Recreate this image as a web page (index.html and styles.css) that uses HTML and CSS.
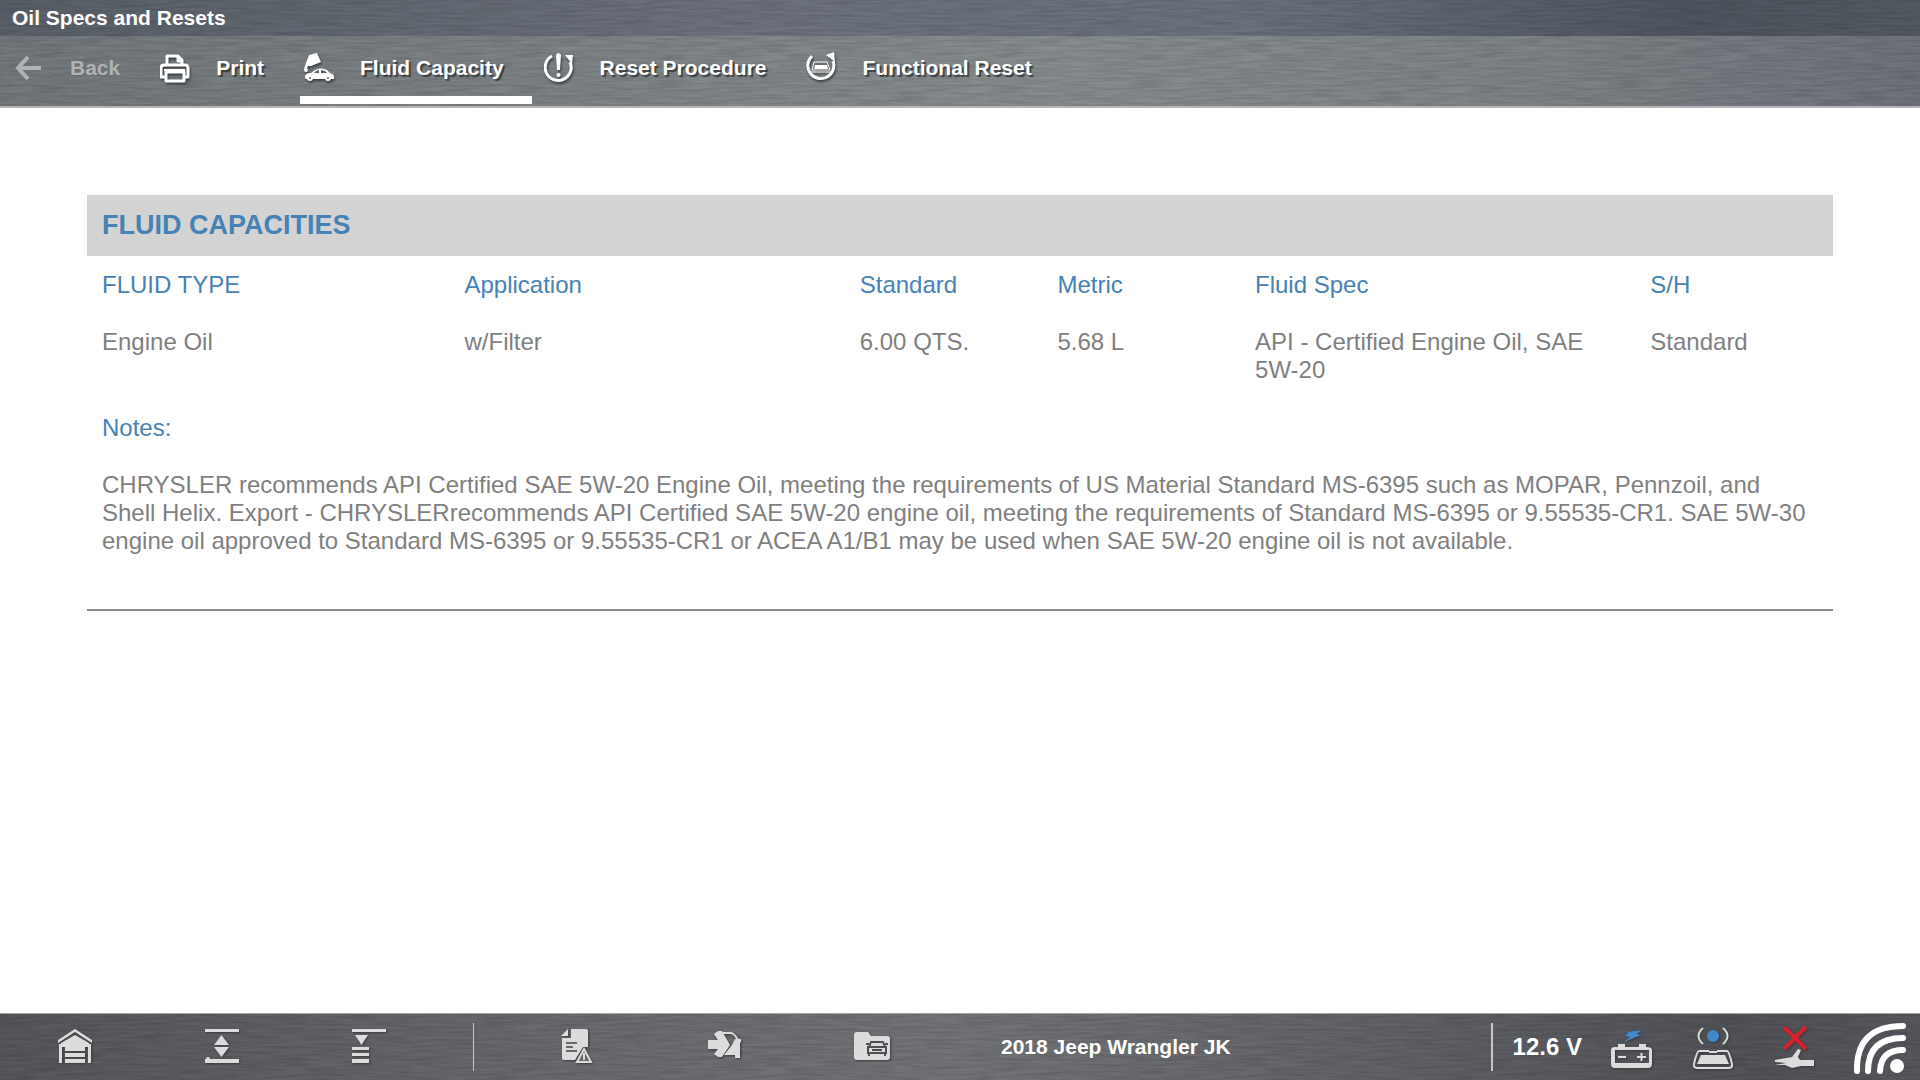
FILE: index.html
```html
<!DOCTYPE html>
<html lang="en">
<head>
<meta charset="utf-8">
<title>Oil Specs and Resets</title>
<link rel="stylesheet" href="styles.css">
</head>
<body>
<header class="top metal">
  <h1 class="title">Oil Specs and Resets</h1>
  <nav class="toolbar">
    <button class="tool" type="button" disabled>
      <svg class="tool-icon" viewBox="0 0 32 32" fill="none" stroke="currentColor" stroke-width="4"><path d="M14 5 4 16l10 11M4 16h23"/></svg>
      <span>Back</span>
    </button>
    <button class="tool" type="button">
      <svg class="tool-icon" viewBox="0 0 32 32" fill="none" stroke="currentColor" stroke-width="3" stroke-linejoin="round"><path d="M7 13V4h11l4 4v5M18 4v5h4"/><path d="M5 25H1V16q0-3 3-3h21q3 0 3 3v9h-4"/><path d="M6 20h18v9H6z"/><path d="M4 18h21" stroke-width="2"/></svg>
      <span>Print</span>
    </button>
    <button class="tool active" type="button">
      <svg class="tool-icon" viewBox="0 0 32 32" fill="currentColor"><path d="m5 3 8-2 4 9-10 4H4l-2 4-2-1 2-6z"/><circle cx="2" cy="18" r="2"/><path fill-rule="evenodd" d="M2 22q2-1 5-1l4-3q6-3 12 0l3 3q4 1 4 4v2H2q-2-2 0-5zm8-1h5v-3q-3 0-5 3zm7 0h6l-2-2-4-1z"/><circle cx="6" cy="26" r="3"/><circle cx="24" cy="26" r="3"/><path d="M5 26h2M23 26h2" stroke="#7d8285" stroke-width="2"/></svg>
      <span>Fluid Capacity</span>
    </button>
    <button class="tool" type="button">
      <svg class="tool-icon" viewBox="0 0 32 32" fill="none" stroke="currentColor" stroke-width="3"><path d="M8 4A13 13 0 1 0 26 10"/><path d="m21 3 8 0-1 9z" fill="currentColor" stroke="none"/><path d="M12 3q2-4 5 0l-1 15h-3z" fill="currentColor" stroke="none"/><circle cx="14.500" cy="23" r="2" fill="currentColor" stroke="none"/></svg>
      <span>Reset Procedure</span>
    </button>
    <button class="tool" type="button">
      <svg class="tool-icon" viewBox="0 0 32 32" fill="none" stroke="currentColor" stroke-width="3"><path d="M6 4A13 13 0 1 0 27 9"/><path d="m20 3 8-3 1 10z" fill="currentColor" stroke="none"/><path d="M6 18l2-8h13l3 8zM5 20h20" stroke-width="1"/><path d="M9 13h12l1 4H8z" fill="currentColor" stroke="none"/></svg>
      <span>Functional Reset</span>
    </button>
  </nav>
</header>

<main class="content">
  <h2 class="section-title">FLUID CAPACITIES</h2>
  <table class="specs">
    <colgroup><col class="c-type"><col class="c-wide"><col class="c-unit"><col class="c-unit"><col class="c-wide"><col class="c-unit"></colgroup>
    <thead>
      <tr><th>FLUID TYPE</th><th>Application</th><th>Standard</th><th>Metric</th><th>Fluid Spec</th><th>S/H</th></tr>
    </thead>
    <tbody>
      <tr><td>Engine Oil</td><td>w/Filter</td><td>6.00 QTS.</td><td>5.68 L</td><td>API - Certified Engine Oil, SAE 5W-20</td><td>Standard</td></tr>
    </tbody>
  </table>
  <section class="notes">
    <h3>Notes:</h3>
    <p>CHRYSLER recommends API Certified SAE 5W-20 Engine Oil, meeting the requirements of US Material Standard MS-6395 such as MOPAR, Pennzoil, and Shell Helix. Export - CHRYSLERrecommends API Certified SAE 5W-20 engine oil, meeting the requirements of Standard MS-6395 or 9.55535-CR1. SAE 5W-30 engine oil approved to Standard MS-6395 or 9.55535-CR1 or ACEA A1/B1 may be used when SAE 5W-20 engine oil is not available.</p>
  </section>
</main>

<footer class="bottom metal">
  <div class="group nav">
    <button class="key" type="button" aria-label="Home">
      <svg viewBox="0 0 36 36" fill="currentColor"><path d="M18 0 35 11v3L18 3 1 14v-3z"/><path d="M18 6 32 14v2H4v-2z"/><path d="M2 15h3v1h26v-1h3v19h-3V18H5v16H2z"/><path d="M8 18h20v4H8zM8 24h20v4H8zM8 30h20v4H8z"/></svg>
    </button>
    <button class="key" type="button" aria-label="Expand">
      <svg viewBox="0 0 36 36" fill="currentColor"><path d="M1 0h34v3H1zM1 30h34v4H1zM17.500 6 25 16H10zM10 18h15l-7.500 10z"/><circle cx="4" cy="30" r="2"/></svg>
    </button>
    <button class="key" type="button" aria-label="Scroll to top">
      <svg viewBox="0 0 36 36" fill="currentColor"><path d="M1 0h34v3H1zM4 6h13l-6.500 10zM1 18h17v3H1zM1 24h17v3H1zM1 30h17v4H1z"/></svg>
    </button>
  </div>
  <div class="group actions">
    <button class="key" type="button" aria-label="Code scan">
      <svg viewBox="0 0 36 36" fill="currentColor"><path d="M11 0h15q2 0 2 2v16h-5l-8 13H4q-2 0-2-2V9h9z"/><path d="m1 7 7-7v7z"/><path d="M6 14h11M6 18h7M6 22h11" stroke="#66676b" stroke-width="2"/><path d="m24 20 7 13H17z" fill="#66676b" stroke="currentColor" stroke-width="2"/><path d="M23 24h2v7h-2z"/></svg>
    </button>
    <button class="key" type="button" aria-label="Vehicle entry">
      <svg viewBox="0 0 36 36" fill="currentColor"><path d="M1 11h10L7 5l4-3h4l8 14-8 12h-4l-4-3 4-5H1z"/><path d="M15 4h9q3 0 7 7" fill="none" stroke="currentColor" stroke-width="2"/><path d="M28 10h6v3l-1 1v15h-5v-3H17l8-10z"/></svg>
    </button>
    <button class="key" type="button" aria-label="Vehicle records">
      <svg viewBox="0 0 36 36" fill="currentColor"><path d="M3 3h11l3 4h16q3 0 3 3v18q0 3-3 3H3q-3 0-3-3V6q0-3 3-3z"/><path d="m15 18 2-5h12l2 5M12 15h3M31 15h3M14 18h18v6H14zM15 24v3M31 24v3M18 21h10" fill="none" stroke="#4f5054" stroke-width="2"/></svg>
    </button>
    <strong class="vehicle">2018 Jeep Wrangler JK</strong>
  </div>
  <div class="group status">
    <strong class="volts">12.6 V</strong>
    <svg class="stat" role="img" aria-label="Battery" viewBox="0 -6 44 46"><path d="m19 2 12-2-4 4 4 1-17 7 6-5-5-1z" fill="#4189c8"/><path d="M8 17v-3h7v3h14v-3h7v3q6 0 6 3v14q0 4-4 4H5q-4 0-4-4V20q0-3 4-3zM5 20v13h34V20z" fill="currentColor" fill-rule="evenodd"/><path d="M8 27h8M27 27h9M31.500 23v8" stroke="currentColor" stroke-width="2"/></svg>
    <svg class="stat" role="img" aria-label="Scanner connected" viewBox="0 -6 44 46" fill="none" stroke="currentColor" stroke-width="2"><circle cx="21" cy="6" r="6" fill="#4189c8" stroke="none"/><path d="M11-2q-9 8 0 16M31-2q9 8 0 16"/><path d="M17 21H7q-2 0-5 13-1 4 4 4h30q5 0 4-4-3-13-5-13H25M17 22h8"/><path d="M9 25h24l4 9H5z" fill="currentColor" stroke="none"/></svg>
    <svg class="stat lead" role="img" aria-label="Scope lead disconnected" viewBox="0 -6 40 46"><path d="m1 30 17-3 6-8 3 1-3 7 2 3h14v6H27l-9 2-7-3H1l11-2-11-1z" fill="currentColor"/><path d="m10-3 22 22M32-3 10 19" stroke="#d8202f" stroke-width="4"/></svg>
    <svg class="wifi" role="img" aria-label="Wireless signal" viewBox="0 -1 56 56" fill="none" stroke="#fff" stroke-width="6" stroke-linecap="round"><path d="M5 51Q4 6 51 6M16 51Q16 18 51 18M28 51Q29 30 51 30"/><circle cx="45" cy="46" r="7" fill="#fff" stroke="none"/></svg>
  </div>
</footer>
</body>
</html>
```
FILE: styles.css
```css
* { box-sizing: border-box; }

/* Fine horizontal streaks of brushed metal */
:root {
  --grain: url("data:image/svg+xml,%3Csvg xmlns='http://www.w3.org/2000/svg' width='480' height='120'%3E%3Cfilter id='g' x='0' y='0' width='100%25' height='100%25'%3E%3CfeTurbulence type='fractalNoise' baseFrequency='0.03 0.4' numOctaves='3' stitchTiles='stitch'/%3E%3CfeColorMatrix values='0 0 0 0 0 0 0 0 0 0 0 0 0 0 0 0.25 0 0 0 -0.07'/%3E%3C/filter%3E%3Crect width='480' height='120' filter='url(%23g)'/%3E%3C/svg%3E");
}

body {
  margin: 0;
  min-height: 100vh;
  display: flex;
  flex-direction: column;
  background: #fff;
  color: #7f7f7f;
  font: 24px/28px "Liberation Sans", Arial, sans-serif;
}

h1, h2, h3, p { margin: 0; }

button {
  border: 0;
  padding: 0;
  background: none;
  font: inherit;
  color: inherit;
}

.metal { background-image: var(--grain), var(--sheen); }

.top {
  --sheen: linear-gradient(90deg, #74797d, #7f8487 30%, #888d8f 55%, #7f8488 80%, #70737b);
  border-bottom: 2px solid #b4b5b6;
  color: #fff;
  font-weight: bold;
}

.title {
  height: 36px;
  padding: 0 12px;
  background: var(--grain), linear-gradient(90deg, #5a6169, #6e737e 40%, #6b737d 65%, #505660 88%, #555b64);
  font-size: 21px;
  line-height: 36px;
}

.toolbar {
  display: flex;
  gap: 8px;
  height: 70px;
  padding: 0 10px;
}

.tool {
  display: flex;
  align-items: center;
  gap: 24px;
  height: 68px;
  padding: 3px 28px 0 4px;
  border-bottom: 8px solid transparent;
  font-size: 21px;
  line-height: 24px;
  white-space: nowrap;
  text-shadow: 2px 2px 1px #3c3f42;
}

.tool:disabled { color: #b0b2b4; text-shadow: 1px 1px 1px #6a6d70; }
.tool.active { border-bottom-color: #fff; }

.tool-icon {
  width: 32px;
  height: 32px;
  filter: drop-shadow(1px 2px 1px #3c3f42);
}

.tool:disabled .tool-icon { filter: none; }

.content {
  flex: 1;
  padding: 87px 87px 0;
}

.section-title {
  padding: 0 15px;
  background: #d3d3d3;
  color: #4682b4;
  font-size: 27px;
  line-height: 61px;
}

.specs {
  width: 100%;
  table-layout: fixed;
  border-collapse: collapse;
}

/* Columns share the width as 11 : 12 : 6 : 6 : 12 : 6 */
.c-type { width: 20.76%; }
.c-wide { width: 22.64%; }
.c-unit { width: 11.32%; }

.specs th,
.specs td {
  padding: 15px 15px 14px;
  text-align: left;
  vertical-align: top;
}

.specs th { color: #4682b4; font-weight: normal; }

.notes {
  padding: 16px 15px 54px;
  border-bottom: 2px solid #8c8c8c;
}

.notes h3 {
  margin-bottom: 29px;
  color: #4682b4;
  font-size: 24px;
  font-weight: normal;
}

.bottom {
  --sheen: linear-gradient(90deg, #56585b, #6b6c70 30%, #747579 50%, #606166 75%, #535459 90%, #57585e);
  display: flex;
  align-items: center;
  height: 67px;
  border-top: 1px solid #a5a5a7;
  color: #dcdcdd;
}

.group { display: flex; align-items: center; height: 48px; }
.nav { gap: 111px; padding: 0 86px 0 57px; border-right: 1px solid #c5c6c8; }
.actions { flex: 1; gap: 111px; padding-left: 86px; }
.status { padding-right: 12px; border-left: 2px solid #c5c6c8; }

.key { width: 36px; height: 36px; }
.key svg { display: block; filter: drop-shadow(1px 1px 1px #38393c); }

.vehicle, .volts { color: #fff; white-space: nowrap; }
.vehicle { font-size: 21px; }
.volts { padding: 0 28px 0 20px; }

.stat {
  width: 44px;
  height: 46px;
  margin-right: 38px;
  overflow: visible;
  filter: drop-shadow(1px 1px 1px #38393c);
}

.lead { width: 40px; }
.wifi { width: 56px; height: 56px; }
```
